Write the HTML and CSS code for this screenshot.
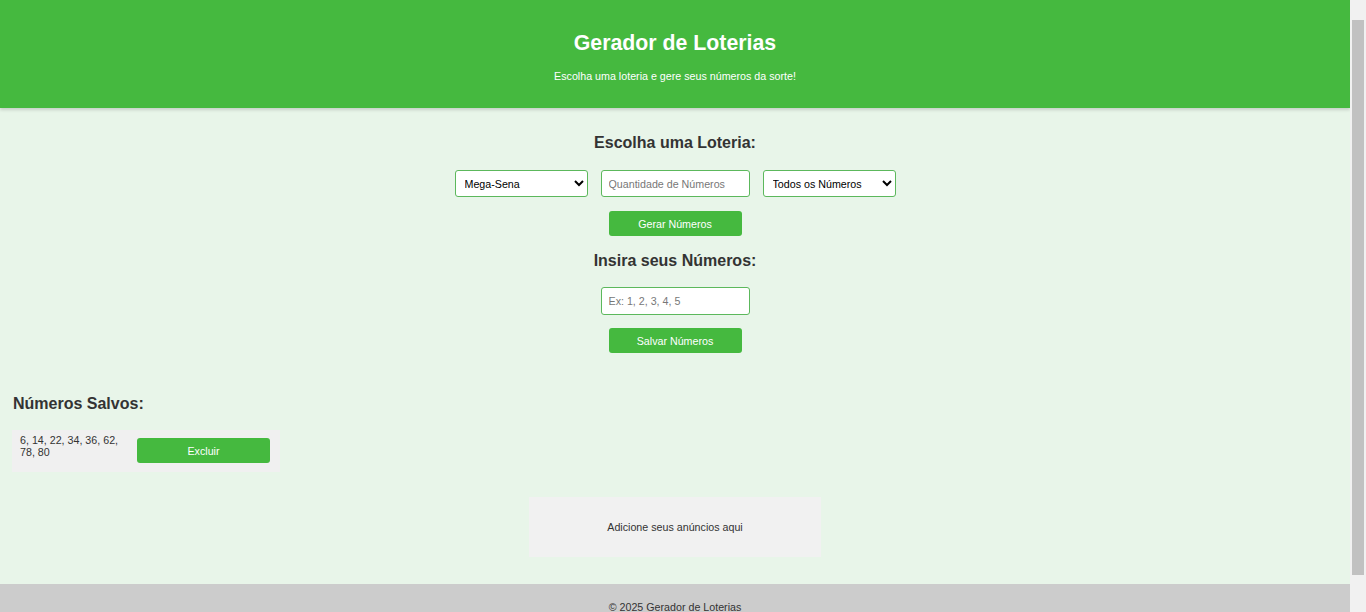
FILE: index.html
```html
<!DOCTYPE html>
<html lang="pt-BR">
<head>
  <meta charset="UTF-8" />
  <meta name="viewport" content="width=device-width, initial-scale=1.0"/>
  <title>Gerador de Loterias</title>
  <link rel="stylesheet" href="styles.css">
</head>
<body>

<header>
  <h1>Gerador de Loterias</h1>
  <p>Escolha uma loteria e gere seus números da sorte!</p>
</header>

<main>
  <section class="generator">
    <h2>Escolha uma Loteria:</h2>
    <div class="controls">
      <select id="lottery">
        <option>Mega-Sena</option>
        <option>Lotofácil</option>
        <option>Quina</option>
        <option>Lotomania</option>
      </select>
      <input type="number" id="quantity" placeholder="Quantidade de Números" />
      <select id="filter">
        <option>Todos os Números</option>
        <option>Somente Pares</option>
        <option>Somente Ímpares</option>
      </select>
    </div>
    <button class="btn" onclick="generate()">Gerar Números</button>

    <h2 class="second">Insira seus Números:</h2>
    <input type="text" id="custom" class="single" placeholder="Ex: 1, 2, 3, 4, 5" />
    <button class="btn save" onclick="saveCustom()">Salvar Números</button>
  </section>

  <section class="saved">
    <h2>Números Salvos:</h2>
    <div id="saved-list"></div>
  </section>

  <div class="ad">Adicione seus anúncios aqui</div>
</main>

<footer>&copy; 2025 Gerador de Loterias</footer>

<script>
  let saved = [[6, 14, 22, 34, 36, 62, 78, 80]];

  function renderSaved() {
    const list = document.getElementById('saved-list');
    list.innerHTML = '';
    saved.forEach((nums, i) => {
      const item = document.createElement('div');
      item.className = 'saved-item';
      item.innerHTML = `
        <span class="nums">${nums.join(', ')}</span>
        <button class="btn" onclick="removeSaved(${i})">Excluir</button>
      `;
      list.appendChild(item);
    });
  }

  function removeSaved(i) {
    saved.splice(i, 1);
    renderSaved();
  }

  function generate() {
    const limits = { 'Mega-Sena': [60, 6], 'Lotofácil': [25, 15], 'Quina': [80, 5], 'Lotomania': [100, 50] };
    const [max, def] = limits[document.getElementById('lottery').value];
    const qty = parseInt(document.getElementById('quantity').value) || def;
    const filter = document.getElementById('filter').selectedIndex;
    const pool = [];
    for (let n = 1; n <= max; n++) {
      if (filter === 1 && n % 2) continue;
      if (filter === 2 && !(n % 2)) continue;
      pool.push(n);
    }
    const picked = pool.sort(() => Math.random() - 0.5).slice(0, qty).sort((a, b) => a - b);
    saved.unshift(picked);
    renderSaved();
  }

  function saveCustom() {
    const field = document.getElementById('custom');
    const nums = field.value.split(',').map(n => parseInt(n)).filter(n => !isNaN(n));
    if (!nums.length) {
      alert("Digite seus números.");
      return;
    }
    saved.unshift(nums);
    field.value = '';
    renderSaved();
  }

  renderSaved();
</script>

</body>
</html>
```

FILE: styles.css
```css
/* right strip drawn like the browser scrollbar seen in the reference */
html {
  background: #f1f1f1 linear-gradient(#f1f1f1 20px, #c1c1c1 20px, #c1c1c1 575px, #f1f1f1 575px) no-repeat right 2px top / 12px 100%;
}

body {
  font-family: "Liberation Sans", Arial, sans-serif;
  font-size: 10.7px;
  background: #e8f5e9;
  color: #333;
  margin: 0 16px 0 0;
  padding: 0;
}

header {
  background: #45b93f;
  color: white;
  text-align: center;
  padding: 31px 0 26px;
  box-shadow: 0 2px 3px rgba(0,0,0,0.15);
}

header h1 {
  margin: 0;
  font-size: 21.3px;
  line-height: 24px;
}

header p {
  margin: 15px 0 0;
  line-height: 12px;
}

h2 {
  margin: 0;
  font-size: 16px;
  line-height: 20px;
  color: #333;
}

.generator {
  text-align: center;
  padding-top: 25px;
  display: flex;
  flex-direction: column;
  align-items: center;
}

.controls {
  display: flex;
  justify-content: center;
  gap: 13px;
  margin-top: 17px;
}

select, input {
  box-sizing: border-box;
  height: 27px;
  border: 1px solid #5cb85c;
  border-radius: 3px;
  background: white;
  font-family: inherit;
  font-size: 10.7px;
  color: #000;
}

select {
  width: 133px;
  padding: 0 5px;
}

input {
  width: 149px;
  padding: 0 7px;
}

input::placeholder {
  color: #777;
}

input.single {
  height: 28px;
  margin-top: 16px;
}

.btn {
  width: 133px;
  height: 25px;
  margin-top: 14px;
  background: #45b93f;
  color: white;
  border: none;
  border-radius: 3px;
  font-family: inherit;
  font-size: 10.7px;
  cursor: pointer;
}

.btn:hover {
  background: #3a9e35;
}

.btn.save {
  margin-top: 13px;
}

h2.second {
  margin-top: 15px;
}

main {
  padding: 0 12px;
}

.saved {
  margin-top: 41px;
}

.saved h2 {
  margin-left: 1px;
}

#saved-list {
  margin-top: 16px;
}

.saved-item {
  display: flex;
  align-items: flex-start;
  gap: 10px;
  width: 268px;
  box-sizing: border-box;
  padding: 4px 10px 9px 8px;
  background: #f0f0f0;
  margin-bottom: 8px;
}

.saved-item .nums {
  flex: 1;
  line-height: 12px;
}

.saved-item .btn {
  margin-top: 4px;
}

.ad {
  width: 292px;
  height: 60px;
  margin: 25px auto 0;
  background: #f1f1f1;
  display: flex;
  align-items: center;
  justify-content: center;
}

footer {
  text-align: center;
  background: #ccc;
  margin-top: 27px;
  padding: 17px 0;
  line-height: 12px;
}
```
